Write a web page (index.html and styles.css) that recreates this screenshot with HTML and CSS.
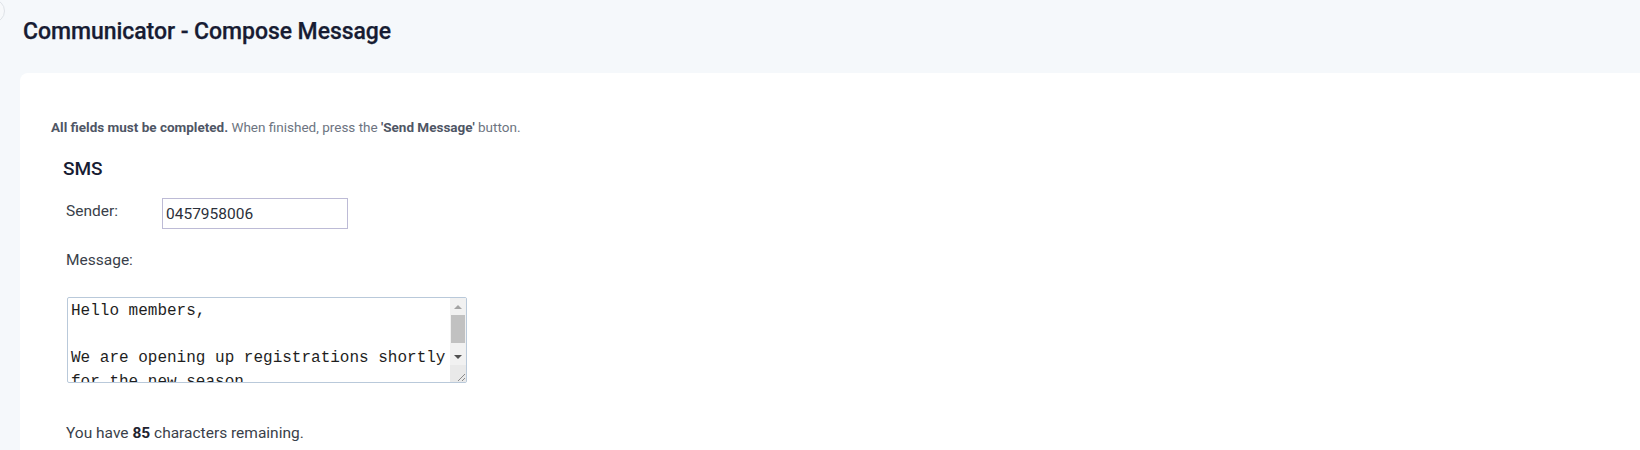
FILE: index.html
```html
<!DOCTYPE html>
<html lang="en">
<head>
<meta charset="utf-8">
<title>Communicator - Compose Message</title>
<link rel="stylesheet" href="styles.css">
</head>
<body>
<div class="edge-toggle"></div>
<header class="page-header">
  <h1 class="page-title">Communicator - Compose Message</h1>
</header>
<main class="card">
  <p class="instructions"><strong class="strong-dark">All fields must be completed.</strong> When finished, press the <strong class="strong-dark">'Send Message'</strong> button.</p>
  <section class="sms">
    <h2 class="sms-title">SMS</h2>
    <div class="field-row">
      <label class="field-label" for="sender">Sender:</label>
      <input class="text-input" id="sender" type="text" value="0457958006">
    </div>
    <div class="field-label message-label">Message:</div>
    <div class="textarea-wrap">
      <textarea class="message-box" rows="4">Hello members,

We are opening up registrations shortly for the new season

Please visit our website to register.</textarea>
      <div class="fake-scrollbar">
        <div class="sb-btn"><span class="tri-up"></span></div>
        <div class="sb-track"><div class="sb-thumb"></div></div>
        <div class="sb-btn"><span class="tri-down"></span></div>
        <div class="sb-corner">
          <svg width="11" height="11" viewBox="0 0 11 11"><path d="M10 3 L3 10 M10 7 L7 10" stroke="#8a8a8a" stroke-width="1" fill="none"/></svg>
        </div>
      </div>
    </div>
    <p class="remaining">You have <b class="count">85</b> characters remaining.</p>
  </section>
</main>
</body>
</html>
```
FILE: styles.css
```css
html, body {
  margin: 0;
  padding: 0;
}
body {
  background: #f5f8fb;
  font-family: Roboto, "Noto Sans", Arial, sans-serif;
  color: #2b2f3a;
  overflow: hidden;
  width: 1640px;
  height: 450px;
  position: relative;
}
.edge-toggle {
  position: absolute;
  left: -19px;
  top: -1px;
  width: 22px;
  height: 22px;
  border-radius: 50%;
  border: 1px solid #dfe3e8;
  background: #f7f9fb;
}
.page-header {
  height: 73px;
  box-sizing: border-box;
  padding: 18px 0 0 23px;
}
.page-title {
  margin: 0;
  font-size: 23px;
  line-height: 28px;
  font-weight: 500;
  color: #171c33;
  letter-spacing: -0.05px;
  -webkit-text-stroke: 0.25px #171c33;
}
.card {
  margin-left: 20px;
  background: #ffffff;
  border-radius: 8px 0 0 0;
  padding: 46px 0 0 31px;
  height: 377px;
  box-sizing: border-box;
}
.instructions {
  margin: 0;
  font-size: 13.5px;
  line-height: 16px;
  color: #6d7481;
  letter-spacing: 0;
}
.strong-dark {
  color: #4f5665;
  font-weight: 700;
}
.sms {
  padding-left: 12px;
}
.sms-title {
  margin: 22px 0 0 0;
  font-size: 19px;
  line-height: 24px;
  font-weight: 500;
  color: #171c33;
}
.field-row {
  display: flex;
  align-items: flex-start;
  margin-top: 17px;
  padding-left: 3px;
}
.field-label {
  font-size: 15.5px;
  line-height: 20px;
  color: #3a3f4a;
}
.field-row .field-label {
  width: 96px;
  padding-top: 3px;
}
.text-input {
  width: 186px;
  height: 31px;
  box-sizing: border-box;
  border: 1px solid #bdbbd6;
  border-radius: 0;
  padding: 0 3px;
  font-family: Roboto, "Noto Sans", Arial, sans-serif;
  font-size: 15.5px;
  color: #2b2f3a;
  background: #fff;
  outline: none;
}
.message-label {
  padding-left: 3px;
  margin-top: 21px;
}
.textarea-wrap {
  position: relative;
  width: 400px;
  height: 86px;
  margin: 27px 0 0 4px;
}
.message-box {
  display: block;
  width: 400px;
  height: 86px;
  box-sizing: border-box;
  border: 1px solid #b9c9da;
  border-radius: 2px;
  padding: 2px 19px 2px 3px;
  font-family: "Liberation Mono", "Courier New", monospace;
  font-size: 16px;
  line-height: 23.5px;
  color: #1e1e1e;
  overflow: hidden;
  resize: none;
  background: #fff;
  outline: none;
}
.fake-scrollbar {
  position: absolute;
  top: 1px;
  right: 1px;
  bottom: 1px;
  width: 16px;
  background: #f1f1f1;
  display: flex;
  flex-direction: column;
}
.sb-btn {
  height: 17px;
  display: flex;
  align-items: center;
  justify-content: center;
}
.tri-up {
  width: 0;
  height: 0;
  border-left: 4px solid transparent;
  border-right: 4px solid transparent;
  border-bottom: 4px solid #a3a3a3;
}
.tri-down {
  width: 0;
  height: 0;
  border-left: 4px solid transparent;
  border-right: 4px solid transparent;
  border-top: 4px solid #505050;
}
.sb-track {
  flex: 1;
  padding: 0 1px;
}
.sb-thumb {
  height: 28px;
  background: #c1c1c1;
}
.sb-corner {
  height: 17px;
  background: #e9e9e9;
  display: flex;
  align-items: flex-end;
  justify-content: flex-end;
}
.sb-corner svg {
  display: block;
}
.remaining {
  margin: 40px 0 0 3px;
  font-size: 15.5px;
  line-height: 20px;
  color: #3a3f4a;
}
.count {
  font-weight: 700;
  color: #1f2430;
}
```
